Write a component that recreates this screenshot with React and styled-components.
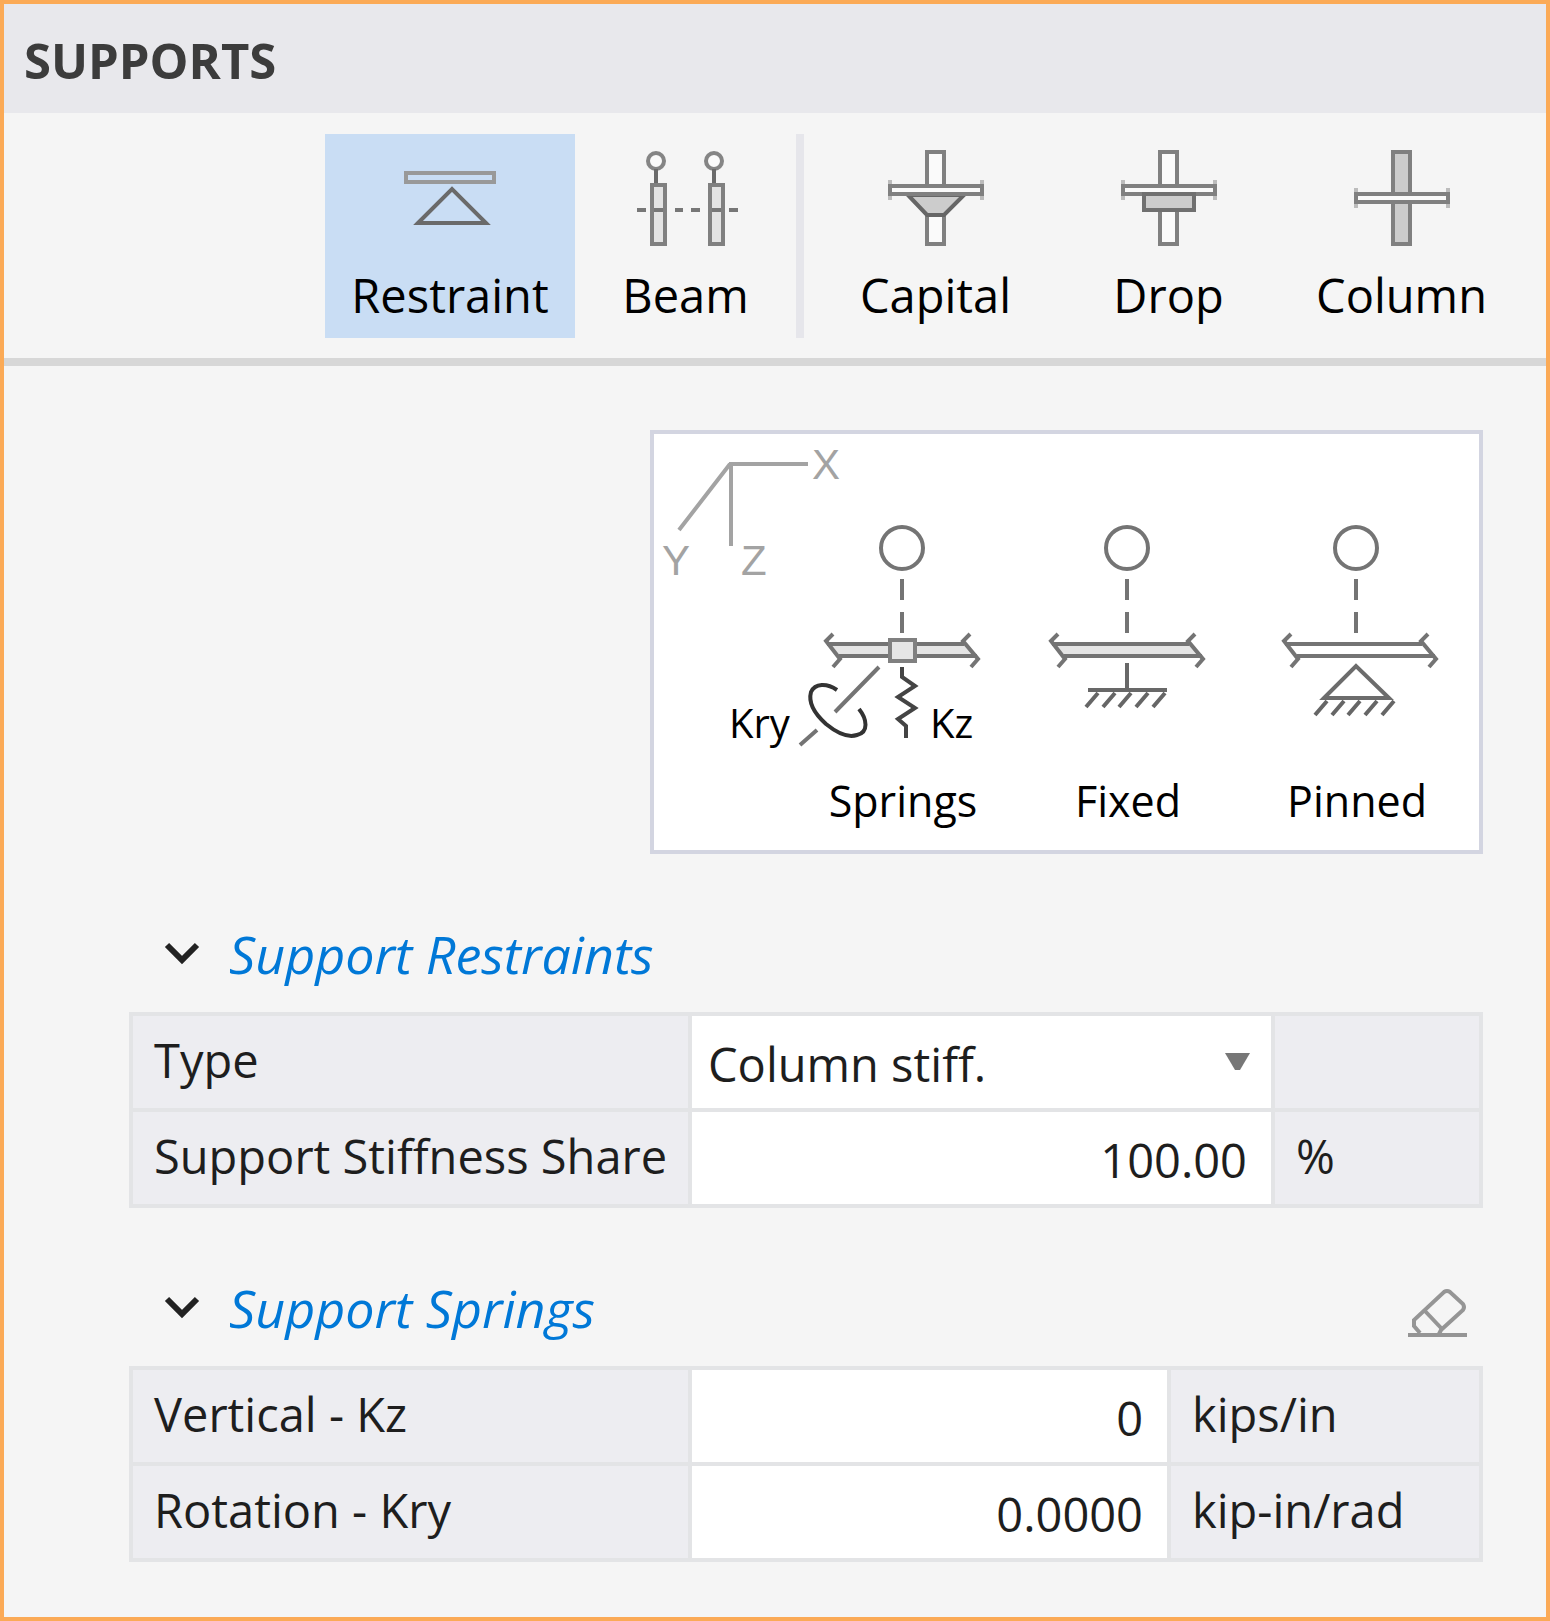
import React, { useState } from 'react'
import styled, { createGlobalStyle } from 'styled-components'

const GlobalStyle = createGlobalStyle`
  * { box-sizing: border-box; }
  body {
    margin: 0;
    background: #f5f5f5;
  }
  body, button, input, select {
    font-family: "Open Sans", "Noto Sans", sans-serif;
    font-size: 47px;
    line-height: 64px;
  }
`;

const Panel = styled.main`
  min-height: 100vh;
  border: 4px solid #fbaa56;
  background: #f5f5f5;
`;

const Header = styled.header`
  display: flex;
  align-items: center;
  height: 109px;
  padding: 2px 20px 0;
  background: #e8e8ec;
`;

const Title = styled.h1`
  margin: 0;
  font-size: 49px;
  font-weight: 700;
  color: #3c3c3c;
`;

const Toolbar = styled.div`
  display: flex;
  justify-content: flex-end;
  padding: 21px 28px 20px;
  border-bottom: 8px solid #d7d7d7;
`;

const ToolButton = styled.button`
  display: flex;
  flex-direction: column;
  align-items: center;
  gap: 15px;
  width: ${({ $width }) => $width}px;
  padding: 14px 0 11px;
  border: none;
  background: ${({ $active }) => ($active ? '#c9ddf4' : 'transparent')};
  color: #000;
  cursor: pointer;
`;

const Separator = styled.div`
  width: 8px;
  margin-right: 15px;
  background: #e6e6eb;
`;

const Icon = styled.svg`
  display: block;
  overflow: visible;
  fill: none;
  stroke: #808080;
  stroke-width: 4;
`;

const Body = styled.div`
  padding: 64px 63px 50px 125px;
`;

const Card = styled.div`
  width: 833px;
  max-width: 100%;
  margin-left: auto;
  border: 4px solid #d3d5e1;
  background: #fff;
`;

const Diagram = styled.svg`
  display: block;
  width: 100%;
  fill: none;
  stroke: #747474;
  stroke-width: 4;

  text {
    stroke: none;
    fill: #000;
    font-size: 43px;
  }
  .stiffness {
    font-size: 40px;
  }
  .axis {
    fill: #a3a3a3;
    font-family: "Liberation Sans", Arial, sans-serif;
    font-size: 42px;
  }
`;

const Section = styled.section`
  margin-top: 68px;
`;

const SectionBar = styled.div`
  display: flex;
  align-items: center;
  justify-content: space-between;
  margin-bottom: 26px;
  padding: 0 16px 0 34px;
`;

const SectionTitle = styled.h2`
  margin: 0;
  font-size: 52px;
  font-weight: 400;
`;

const Toggle = styled.button`
  display: flex;
  align-items: center;
  gap: 28px;
  padding: 0;
  border: none;
  background: none;
  color: #0078d7;
  font-size: 52px;
  font-style: italic;
  cursor: pointer;
`;

const ClearButton = styled.button`
  padding: 8px 0 0;
  border: none;
  background: none;
  cursor: pointer;
`;

const Grid = styled.table`
  width: 100%;
  table-layout: fixed;
  border-spacing: 4px;
  background: #e3e4e6;
  color: #1e1e1e;
`;

const LabelCell = styled.th`
  width: 555px;
  height: 92px;
  padding: 0 0 4px 21px;
  background: #ededf1;
  font-weight: 400;
  text-align: left;
  white-space: nowrap;
`;

const ValueCell = styled.td`
  padding: 4px 0 0;
  background: #fff;
`;

const UnitCell = styled.td`
  width: ${({ $width }) => $width}px;
  padding: 0 0 4px 21px;
  background: #ededf1;
  white-space: nowrap;
`;

const Input = styled.input`
  display: block;
  width: 100%;
  padding: 0 24px;
  border: none;
  outline: none;
  background: transparent;
  color: inherit;
  height: 64px;
  text-align: right;
`;

const SelectBox = styled.div`
  position: relative;
`;

const Select = styled.select`
  display: block;
  width: 100%;
  height: 64px;
  padding: 0 60px 0 16px;
  border: none;
  outline: none;
  appearance: none;
  background: transparent;
  color: inherit;
`;

const Arrow = styled.svg`
  position: absolute;
  top: 21px;
  right: 21px;
  fill: #777;
  pointer-events: none;
`;

const RestraintIcon = () => (
  <Icon width="100" height="100" viewBox="0 0 100 100">
    <rect x="6" y="25" width="88" height="9" stroke="#999" />
    <path d="M18 75 L52 41 L86 75 Z" stroke="#6a6a6a" />
  </Icon>
)

const BeamIcon = () => (
  <Icon width="101" height="100" viewBox="0 0 101 100">
    {[21, 79].map((x) => (
      <g key={x}>
        <circle cx={x} cy="13" r="8" stroke="#858585" fill="#fafafa" />
        <path d={`M${x} 21 V36`} stroke="#6a6a6a" />
        <rect x={x - 4} y="37" width="13" height="59" fill="#e3e3e3" />
      </g>
    ))}
    <path d="M2 62 H11 M19 62 H28 M40 62 H48 M56 62 H65 M77 62 H86 M94 62 H103" stroke="#777" />
  </Icon>
)

const Slab = ({ y }) => (
  <>
    <path d={`M5 ${y - 6} v20 M97 ${y - 6} v20`} stroke="#bcbcbc" />
    <rect x="5" y={y} width="92" height="8" fill="#fafafa" />
  </>
)

const CapitalIcon = () => (
  <Icon width="101" height="100" viewBox="0 0 101 100">
    <rect x="42" y="4" width="17" height="92" fill="#fafafa" />
    <path d="M23 47 L42 67 H59 L79 47 Z" fill="#ccc" stroke="#666" />
    <Slab y={38} />
  </Icon>
)

const DropIcon = () => (
  <Icon width="101" height="100" viewBox="0 0 101 100">
    <rect x="42" y="4" width="17" height="92" fill="#fafafa" />
    <Slab y={38} />
    <rect x="26" y="46" width="50" height="16" fill="#ccc" stroke="#707070" />
  </Icon>
)

const ColumnIcon = () => (
  <Icon width="101" height="100" viewBox="0 0 101 100">
    <rect x="42" y="4" width="17" height="92" fill="#ccc" />
    <Slab y={46} />
  </Icon>
)

const ChevronIcon = () => (
  <Icon width="38" height="24" viewBox="0 0 38 24">
    <path d="M4 3 L19 18 L34 3" stroke="#222" strokeWidth="6" />
  </Icon>
)

const EraserIcon = () => (
  <Icon width="59" height="50" viewBox="0 0 59 50">
    <g stroke="#959595">
      <path d="M0 48 H59" />
      <path d="M12 46 L6 39 V33 L36 5 Q39 3 42 5 L55 17 Q57 20 55 23 L33 43 L31 47" />
      <path d="M17 24 L34 42" />
    </g>
  </Icon>
)

const Beam = ({ shift = 0, fill = '#e5e5e5' }) => (
  <g transform={`translate(${shift} 0)`}>
    <path d="M-75 210 H63 L76 222 H-62 Z" fill={fill} stroke="none" />
    <path d="M-75 210 H62 M-63 222 H75" />
    <path d="M-69 200 L-76 207 L-62 225 L-69 233 M68 200 L61 207 L76 225 L69 233" />
  </g>
)

const Node = ({ x, label, children }) => (
  <g transform={`translate(${x} 0)`}>
    <circle cx="0" cy="114" r="21" />
    <path d="M0 145 V166 M0 178 V199" />
    {children}
    <text x="1" y="383" textAnchor="middle">{label}</text>
  </g>
)

const SupportDiagram = () => (
  <Diagram viewBox="0 0 825 416">
    <path d="M75 30 H154 M77 30 V112 M76 30 L25 96" stroke="#a3a3a3" />
    <text className="axis" x="158" y="45">X</text>
    <text className="axis" x="8" y="141">Y</text>
    <text className="axis" x="87" y="141">Z</text>
    <text className="stiffness" x="75" y="304">Kry</text>
    <text className="stiffness" x="276" y="304">Kz</text>

    <Node x={248} label="Springs">
      <Beam />
      <rect x="-12" y="206" width="25" height="21" fill="#e5e5e5" stroke="#808080" />
      <path d="M0 233 V243 L13 252 L-4 263 L13 274 L-4 285 L4 292 V304" stroke="#444" />
      <path d="M-23 233 L-67 278 M-85 296 L-102 311" />
      <path
        d="M-65 256 C-75 249 -87 249 -91 258 C-94 269 -86 281 -76 290 C-65 299 -54 304 -45 301 C-33 298 -35 285 -43 275"
        stroke="#333"
      />
    </Node>

    <Node x={473} label="Fixed">
      <Beam />
      <path d="M0 229 V256 M-39 256 H40" stroke="#686868" />
      <path d="M-29 259 l-12 14 M-12 259 l-12 14 M4 259 l-12 14 M21 259 l-12 14 M38 259 l-12 14" stroke="#666" />
    </Node>

    <Node x={702} label="Pinned">
      <Beam shift={4} fill="#fff" />
      <path d="M-32 264 L0 232 L33 264 Z" stroke="#6c6c6c" />
      <path d="M-29 267 l-12 14 M-12 267 l-12 14 M4 267 l-12 14 M21 267 l-12 14 M38 267 l-12 14" stroke="#666" />
    </Node>
  </Diagram>
)

const tools = [
  { name: 'Restraint', icon: RestraintIcon, width: 250 },
  { name: 'Beam', icon: BeamIcon, width: 221, last: true },
  { name: 'Capital', icon: CapitalIcon, width: 233 },
  { name: 'Drop', icon: DropIcon, width: 233 },
  { name: 'Column', icon: ColumnIcon, width: 233 },
]

const Group = ({ title, action, children }) => {
  const [open, setOpen] = useState(true)
  return (
    <Section>
      <SectionBar>
        <SectionTitle>
          <Toggle type="button" aria-expanded={open} onClick={() => setOpen(!open)}>
            <ChevronIcon />
            {title}
          </Toggle>
        </SectionTitle>
        {action}
      </SectionBar>
      {open && (
        <Grid>
          <tbody>{children}</tbody>
        </Grid>
      )}
    </Section>
  )
}

const NumberRow = ({ id, label, value, unit, unitWidth }) => (
  <tr>
    <LabelCell scope="row"><label htmlFor={id}>{label}</label></LabelCell>
    <ValueCell><Input id={id} type="text" defaultValue={value} /></ValueCell>
    <UnitCell $width={unitWidth}>{unit}</UnitCell>
  </tr>
)

const App = () => {
  const [tool, setTool] = useState('Restraint')

  return (
    <>
      <GlobalStyle />
      <Panel>
        <Header>
          <Title>SUPPORTS</Title>
        </Header>
        <Toolbar>
          {tools.map(({ name, icon: ToolIcon, width, last }) => (
            <React.Fragment key={name}>
              <ToolButton
                type="button"
                $width={width}
                $active={tool === name}
                aria-pressed={tool === name}
                onClick={() => setTool(name)}
              >
                <ToolIcon />
                {name}
              </ToolButton>
              {last && <Separator />}
            </React.Fragment>
          ))}
        </Toolbar>
        <Body>
          <Card>
            <SupportDiagram />
          </Card>

          <Group title="Support Restraints">
            <tr>
              <LabelCell scope="row"><label htmlFor="type">Type</label></LabelCell>
              <ValueCell>
                <SelectBox>
                  <Select id="type" defaultValue="Column stiff.">
                    <option>Column stiff.</option>
                    <option>Springs</option>
                    <option>Fixed</option>
                    <option>Pinned</option>
                  </Select>
                  <Arrow width="25" height="17" viewBox="0 0 25 17">
                    <path d="M0 0 H25 L15 17 H10 Z" />
                  </Arrow>
                </SelectBox>
              </ValueCell>
              <UnitCell $width={204} />
            </tr>
            <NumberRow id="share" label="Support Stiffness Share" value="100.00" unit="%" unitWidth={204} />
          </Group>

          <Group
            title="Support Springs"
            action={<ClearButton type="button" aria-label="Clear springs"><EraserIcon /></ClearButton>}
          >
            <NumberRow id="kz" label="Vertical - Kz" value="0" unit="kips/in" unitWidth={308} />
            <NumberRow id="kry" label="Rotation - Kry" value="0.0000" unit="kip-in/rad" unitWidth={308} />
          </Group>
        </Body>
      </Panel>
    </>
  )
}

export default App
